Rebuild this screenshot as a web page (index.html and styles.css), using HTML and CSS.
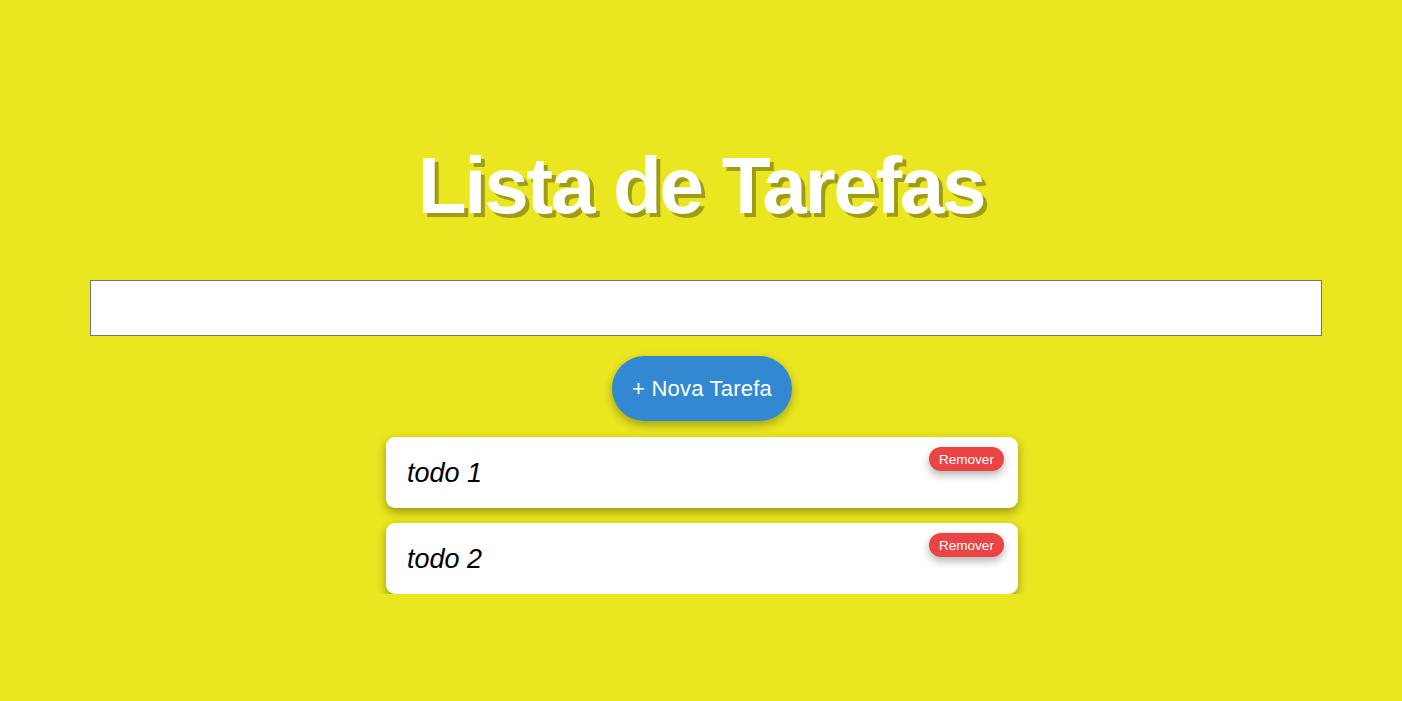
FILE: index.html
```html
<!DOCTYPE html>
<html lang="pt">
<head>
<meta charset="utf-8">
<title>Lista de Tarefas</title>
<link rel="stylesheet" href="styles.css">
</head>
<body>
<main class="app">
  <h1 class="title">Lista de Tarefas</h1>
  <input class="task-input" type="text">
  <button class="add-btn">+ Nova Tarefa</button>
  <ul class="list">
    <li class="card"><span class="card-text">todo 1</span><button class="remove-btn">Remover</button></li>
    <li class="card"><span class="card-text">todo 2</span><button class="remove-btn">Remover</button></li>
  </ul>
</main>
</body>
</html>
```
FILE: styles.css
```css
html, body {
  margin: 0;
  padding: 0;
  background: #eae620;
  font-family: "Liberation Sans", Arial, sans-serif;
}
.app {
  display: flex;
  flex-direction: column;
  align-items: center;
  padding-top: 140px;
}
.title {
  margin: 0;
  font-size: 80px;
  font-weight: bold;
  line-height: 92px;
  letter-spacing: -2.3px;
  color: #fff;
  text-shadow: 4px 4px 0 rgba(0, 0, 0, 0.32);
}
.task-input {
  box-sizing: border-box;
  align-self: stretch;
  margin: 48px 80px 0 90px;
  height: 56px;
  border: 1px solid #767676;
  background: #fff;
  font-size: 20px;
  padding: 0 10px;
  outline: none;
}
.add-btn {
  margin: 20px 0 0 2px;
  width: 180px;
  height: 65px;
  border: none;
  border-radius: 33px;
  background: #3288d1;
  color: #fff;
  font-family: "Liberation Sans", Arial, sans-serif;
  font-size: 22px;
  letter-spacing: 0.2px;
  box-shadow: 0 4px 10px rgba(0, 0, 0, 0.3);
  cursor: pointer;
}
.list {
  list-style: none;
  margin: 16px 0 0 2px;
  padding: 0;
  display: flex;
  flex-direction: column;
  gap: 15px;
  width: 632px;
}
.card {
  box-sizing: border-box;
  height: 71px;
  background: #fff;
  border-radius: 9px;
  box-shadow: 0 4px 10px rgba(0, 0, 0, 0.35);
  display: flex;
  justify-content: space-between;
  align-items: flex-start;
  padding: 10px 14px 0 21px;
}
.card-text {
  font-style: italic;
  font-size: 27px;
  color: #000;
  margin-top: 11px;
}
.remove-btn {
  width: 75px;
  height: 24px;
  border: none;
  border-radius: 12px;
  background: #ea4444;
  color: #fff;
  font-family: "Liberation Sans", Arial, sans-serif;
  font-size: 13.5px;
  padding: 0;
  box-shadow: 0 4px 8px rgba(0, 0, 0, 0.3);
  cursor: pointer;
}
```
